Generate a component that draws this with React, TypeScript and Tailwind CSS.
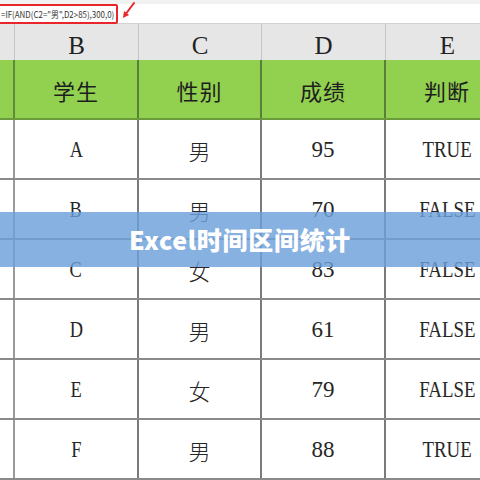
import React from "react";

const cols = ["B", "C", "D", "E"];
const head = ["学生", "性别", "成绩", "判断"];
const rows = [
  ["A", "男", "95", "TRUE"],
  ["B", "男", "70", "FALSE"],
  ["C", "女", "83", "FALSE"],
  ["D", "男", "61", "FALSE"],
  ["E", "女", "79", "FALSE"],
  ["F", "男", "88", "TRUE"],
];

const serif = "font-['Liberation_Serif','Noto_Sans_CJK_SC',serif]";
const grid = "grid grid-cols-[15px_124px_123px_124px_124px]";

const App: React.FC = () => {
  return (
    <div className="relative w-[480px] h-[480px] overflow-hidden bg-white">
      {/* formula bar */}
      <div className="h-[24px] bg-[#f1f1f1] pt-[4px] border-b border-[#d2d2d2]">
        <div className="h-[19px] bg-white flex items-start">
          <div className="ml-[-4px] h-[20px] w-[122px] border-2 border-[#e8262b] rounded-[2px] flex items-center pl-[3px] text-[9px] text-[#333] font-['Noto_Sans_CJK_SC',sans-serif] whitespace-nowrap leading-none overflow-hidden">
            <span className="inline-block origin-left scale-x-[0.88]">=IF(AND(C2="男",D2&gt;85),300,0)</span>
          </div>
          <svg width="16" height="18" viewBox="0 0 16 18" className="ml-[3px] mt-[-3px]">
            <path d="M13 2 L4 14" stroke="#e8262b" strokeWidth="2" strokeLinecap="round" />
            <path d="M2 17 L3 10 L8 14 Z" fill="#e8262b" />
          </svg>
        </div>
      </div>

      {/* column letters */}
      <div className={`${grid} h-[36px] bg-[#e6e6e6]`}>
        <div className="border-r border-[#c6c6c6]" />
        {cols.map((c) => (
          <div
            key={c}
            className={`border-r border-[#c6c6c6] flex items-center justify-center pt-[3px] text-[25px] text-[#222] ${serif}`}
          >
            {c}
          </div>
        ))}
      </div>

      {/* green header */}
      <div className={`${grid} h-[60px] bg-[#92d050] border-b-2 border-[#6a9a3c]`}>
        <div className="border-r-2 border-[#5f8a3a]" />
        {head.map((h) => (
          <div
            key={h}
            className="border-r-2 border-[#5a7f38] flex items-center justify-center pt-[2px] text-[22px] text-[#1e1e1e] font-['Noto_Sans_CJK_SC',sans-serif] tracking-[1px]"
          >
            {h}
          </div>
        ))}
      </div>

      {/* body */}
      {rows.map((r, i) => (
        <div key={i} className={`${grid} h-[60px] border-b-2 border-[#8a8a8a]`}>
          <div className="border-r-2 border-[#9a9a9a]" />
          {r.map((v, j) => (
            <div
              key={j}
              className={`border-r-2 border-[#7a7a7a] flex items-center justify-center pt-[2px] text-[#262626] ${
                j === 1 ? "text-[22px] font-['Noto_Sans_CJK_SC',sans-serif] font-light" : `text-[23px] ${serif}`
              }`}
            >
              <span className={`inline-block ${j === 0 ? "scale-x-[0.8]" : ""} ${j === 3 ? "scale-x-[0.82]" : ""}`}>
                {v}
              </span>
            </div>
          ))}
        </div>
      ))}

      {/* title banner */}
      <div className="absolute left-0 right-0 top-[212px] h-[55px] bg-[rgba(108,160,218,0.82)] flex items-center justify-center">
        <span className="text-white text-[25px] font-black font-['Noto_Sans_CJK_SC',sans-serif] tracking-[0.7px]">
          Excel时间区间统计
        </span>
      </div>
    </div>
  );
};

export default App;
